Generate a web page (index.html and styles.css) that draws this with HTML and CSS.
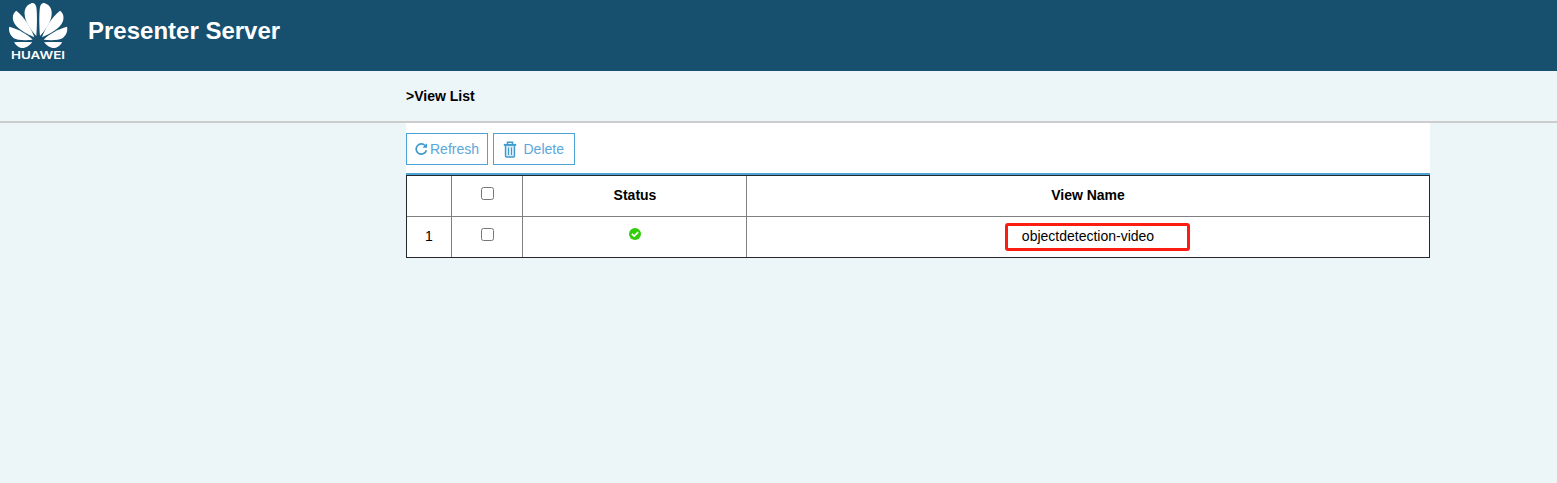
FILE: index.html
```html
<!DOCTYPE html>
<html lang="en">
<head>
<meta charset="utf-8">
<title>Presenter Server</title>
<link rel="stylesheet" href="styles.css">
</head>
<body>
<header class="header">
  <svg class="logo" width="80" height="71" viewBox="0 0 80 71" role="img" aria-label="Huawei">
    <defs>
      <g id="petals">
        <path d="M36.300 36C37 28 37.400 14 36.300 7C35.500 3.500 33 2.300 31 3.500C26.500 5 24.300 9 24.600 14C25 22 31 30 36.300 36Z"/>
        <path d="M34.300 37.300C31 28 25 18 16.300 10.800C12.800 13.500 12.300 17 13.300 21C16 28.500 26 33.500 34.300 37.300Z"/>
        <path d="M32.600 39.800C27 34 18 29 9.300 26.800C8.300 31 10 35 13.500 38C17 40.500 26 40.400 32.600 39.800Z"/>
        <path d="M32.300 42.200C27 41.900 20 41.900 14 42.200C16.500 46.300 20 48.300 23.500 47.900C27 47.600 29.800 45 32.300 42.200Z"/>
      </g>
    </defs>
    <use href="#petals" fill="#fff"/>
    <use href="#petals" fill="#fff" transform="matrix(-1 0 0 1 76.300 0)"/>
    <text class="logo-text" x="11" y="59" textLength="54" lengthAdjust="spacingAndGlyphs">HUAWEI</text>
  </svg>
  <h1 class="title">Presenter Server</h1>
</header>
<nav class="crumb">&gt;View List</nav>
<main class="panel">
  <div class="toolbar">
    <button class="btn refresh">
      <svg width="14" height="14" viewBox="0 0 14 14" fill="none"><path d="M11.300 8.200A5.100 5.100 0 1 1 10 3.500" stroke="#3d9bcf" stroke-width="1.700"/><path d="M12 1.200V5.800H7.400Z" fill="#3d9bcf"/></svg>
      <span>Refresh</span>
    </button>
    <button class="btn delete">
      <svg width="14" height="17" viewBox="0 0 14 17" fill="none" stroke="#3d9bcf"><path d="M2.500 5V15Q2.500 16 3.500 16H10.500Q11.500 16 11.500 15V5" fill="#d5eaf6" stroke-width="1.400"/><path d="M4.500 3V1.200H9.500V3" stroke-width="1.500"/><path d="M.8 3.900H13.200" stroke-width="2"/><path d="M5.500 6.500V14M8.500 6.500V14" stroke-width="1"/></svg>
      <span>Delete</span>
    </button>
  </div>
  <div class="grid">
    <div class="cell"></div>
    <div class="cell"><input class="check" type="checkbox"></div>
    <div class="cell head state">Status</div>
    <div class="cell head">View Name</div>
    <div class="cell">1</div>
    <div class="cell"><input class="check" type="checkbox"></div>
    <div class="cell"><svg class="status" width="12" height="12" viewBox="0 0 12 12"><circle cx="6" cy="6" r="6" fill="#32cd0a"/><path d="M2.900 5.900L5.200 8.100L9.200 4.200" fill="none" stroke="#fff" stroke-width="1.800"/></svg></div>
    <div class="cell name">objectdetection-video<span class="highlight"></span></div>
  </div>
</main>
</body>
</html>
```
FILE: styles.css
```css
* { box-sizing: border-box; }
body {
  margin: 0;
  background: #ecf5f8;
  color: #000;
  font: 14px/16px "Liberation Sans", Arial, sans-serif;
}
.header {
  display: flex;
  height: 71px;
  background: #17506f;
}
.logo { display: block; }
.logo-text {
  fill: #fff;
  font: 600 11px Inter, sans-serif;
}
.title {
  margin: 17px 0 0 8px;
  color: #fff;
  font-size: 24px;
  line-height: 28px;
}
.crumb {
  height: 52px;
  padding: 17px 0 0 406px;
  border-bottom: 2px solid #ccc;
  font-weight: bold;
}
.panel {
  width: 1024px;
  margin-left: 406px;
  background: #fff;
}
.toolbar {
  display: flex;
  gap: 5px;
  height: 52px;
  padding-top: 10px;
  border-bottom: 2px solid #4ba3d8;
}
.btn {
  display: flex;
  align-items: center;
  width: 82px;
  height: 32px;
  padding: 0 0 0 8px;
  border: 1px solid #4ba3d8;
  background: #fff;
  color: #5aa7dc;
  font: inherit;
}
.refresh { gap: 1px; }
.delete { gap: 6.500px; padding-left: 9px; }
.grid {
  display: grid;
  grid-template-columns: 45px 71px 224px 682px;
  grid-template-rows: 41px 40px;
  height: 83px;
  border: 1px solid #24282c;
}
.cell {
  display: flex;
  align-items: center;
  justify-content: center;
  padding-bottom: 2px;
  border-right: 1px solid #808080;
}
.cell:nth-child(-n+4) { border-bottom: 1px solid #808080; }
.cell:nth-child(4n) { border-right: 0; }
.head { font-weight: bold; }
.state { padding-left: 1px; }
.check {
  width: 13px;
  height: 13px;
  margin: 0 0 4px;
}
.status { margin-bottom: 4px; }
.name { position: relative; }
.highlight {
  position: absolute;
  left: 258px;
  top: 6px;
  width: 185px;
  height: 28px;
  border: 3px solid #fb1c12;
  border-radius: 3px;
}
```
